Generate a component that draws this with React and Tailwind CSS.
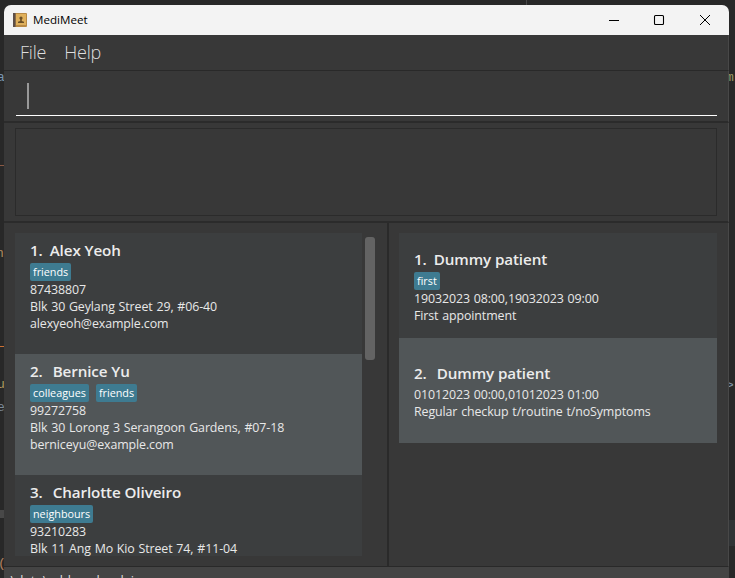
import React from "react";

const people = [
  { n: 1, name: "Alex Yeoh", tags: ["friends"], lines: ["87438807", "Blk 30 Geylang Street 29, #06-40", "alexyeoh@example.com"] },
  { n: 2, name: "Bernice Yu", tags: ["colleagues", "friends"], lines: ["99272758", "Blk 30 Lorong 3 Serangoon Gardens, #07-18", "berniceyu@example.com"] },
  { n: 3, name: "Charlotte Oliveiro", tags: ["neighbours"], lines: ["93210283", "Blk 11 Ang Mo Kio Street 74, #11-04"] },
];

const appointments = [
  { n: 1, name: "Dummy patient", tags: ["first"], lines: ["19032023 08:00,19032023 09:00", "First appointment"] },
  { n: 2, name: "Dummy patient", tags: [], lines: ["01012023 00:00,01012023 01:00", "Regular checkup t/routine t/noSymptoms"] },
];

function Card({ item, className }) {
  return (
    <div className={`flex shrink-0 flex-col px-[15px] ${item.n % 2 ? "bg-[#3c3e3f]" : "bg-[#515658]"} ${className}`}>
      <div className={`mb-[3px] flex h-[20px] items-center text-[15.2px] leading-[20px] font-semibold tracking-[-0.1px] text-[#ececec] ${item.n === 1 ? "gap-[7px]" : "gap-[10px]"}`}>
        <span>{item.n}.</span>
        <span>{item.name}</span>
      </div>
      {item.tags.length > 0 && (
        <div className="flex h-[18px] gap-[7px]">
          {item.tags.map((t) => (
            <span key={t} className="rounded-[2px] bg-[#3e7b91] px-[3px] text-[10.8px] leading-[18px] text-white">{t}</span>
          ))}
        </div>
      )}
      {item.lines.map((l) => (
        <div key={l} className="h-[17px] text-[12.4px] leading-[17px] tracking-[-0.1px] text-[#e8e8e8] [word-spacing:0.7px]">{l}</div>
      ))}
    </div>
  );
}

// Slivers of the code editor that show beside the window
function EditorBehind() {
  return (
    <div className="absolute inset-0 font-['Liberation_Mono',monospace] text-[13px] leading-[15px]">
      <span className="absolute top-0 left-[526px] h-[5px] w-px bg-[#484848]" />
      <span className="absolute top-[70px] left-[-3px] text-[#7896b0]">a</span>
      <span className="absolute top-[165px] left-0 h-px w-[4px] bg-[#8a5a45]" />
      <span className="absolute top-[246px] left-[-4px] text-[#b08a60]">n</span>
      <span className="absolute top-[346px] left-0 h-px w-[4px] bg-[#cc7033]" />
      <span className="absolute top-[377px] left-[-3px] text-[#b09a60]">u</span>
      <span className="absolute top-[400px] left-[-3px] text-[#7c8a99]">e</span>
      <span className="absolute top-[510px] left-0 h-[8px] w-[4px] bg-[#484848]" />
      <span className="absolute top-[556px] left-[-2px] text-[#b58260]">(</span>
      <span className="absolute top-[70px] left-[726px] text-[#9a9a65]">m</span>
      <span className="absolute top-[378px] left-[726px] text-[#8295a8]">&gt;</span>
      <span className="absolute top-[520px] right-0 h-[26px] w-[7px] bg-[#303335]" />
    </div>
  );
}

export default function App() {
  return (
    <div className="relative h-[578px] w-[735px] overflow-hidden bg-[#282828] px-[4px] pt-[5px] font-['Open_Sans','Noto_Sans',sans-serif] whitespace-nowrap">
      <EditorBehind />
      <div className="relative flex h-[573px] w-[725px] flex-col overflow-hidden rounded-t-[7px] bg-[#383838]">
        <header className="flex h-[30px] shrink-0 items-center bg-[#f3f3f3] pl-[9px] text-black">
          <svg width="14" height="14" viewBox="0 0 14 14">
            <rect width="14" height="14" rx="1" fill="#b98a45" />
            <rect width="2.5" height="14" fill="#5d4f48" />
            <rect x="3" y="1" width="10" height="11" fill="#dfb05c" />
            <circle cx="8" cy="5" r="1.6" fill="#6a4f26" />
            <path d="M7.2 6h1.6v2l2.2.8V10H5V8.8l2.2-.8z" fill="#6a4f26" />
          </svg>
          <span className="ml-[6px] flex-1 text-[11.6px]">MediMeet</span>
          <svg className="mr-[18px]" width="102" height="12" viewBox="0 0 102 12" fill="none" stroke="#000">
            <path d="M0 6.5h10" />
            <rect x="45.5" y="1.5" width="9" height="9" rx="1" strokeWidth="1.1" />
            <path d="m91 1 10 10M101 1 91 11" />
          </svg>
        </header>
        <nav className="flex h-[36px] shrink-0 items-center gap-[18px] border-r border-b border-r-[#484848] border-b-[#292929] pl-[16px] text-[18px] font-light tracking-[-0.2px] text-[#dedede]">
          <span>File</span>
          <span>Help</span>
        </nav>
        <div className="h-[52px] shrink-0 border-r border-b-2 border-r-[#484848] border-b-[#2b2b2b] pr-[11px] pl-[12px] pt-[12px]">
          <div className="h-[33px] border-b border-white pl-[11px]">
            <div className="h-[26px] w-[2px] bg-[#999]" />
          </div>
        </div>
        <div className="h-[100px] shrink-0 border-r border-b-2 border-r-[#484848] border-b-[#2b2b2b] px-[11px] pt-[5px]">
          <div className="h-[88px] w-[702px] border border-[#2b2b2b]" />
        </div>
        <main className="flex h-[344px] shrink-0 border-r border-b border-r-[#484848] border-b-[#292929]">
          <section className="flex w-[385px] border-r-2 border-[#2a2a2a] pt-[10px] pl-[11px]">
            <div className="h-[323px] w-[347px] overflow-hidden">
              {people.map((p) => <Card key={p.n} item={p} className="h-[121px] pt-[7px]" />)}
            </div>
            <div className="mt-[4px] ml-[3px] h-[123px] w-[10px] rounded-[3px] bg-[#636363]" />
          </section>
          <section className="pt-[10px] pl-[10px]">
            <div className="w-[318px]">
              {appointments.map((p) => <Card key={p.n} item={p} className={p.n === 1 ? "h-[105px] pt-[16px]" : "h-[105px] pt-[25px]"} />)}
            </div>
          </section>
        </main>
        <footer className="h-[11px] shrink-0 overflow-hidden bg-[#444] pt-[4px] pl-[3px] text-[13px] leading-[18px] tracking-[0.1px] text-[#ddd]">.\data\addressbook.json</footer>
      </div>
    </div>
  );
}
